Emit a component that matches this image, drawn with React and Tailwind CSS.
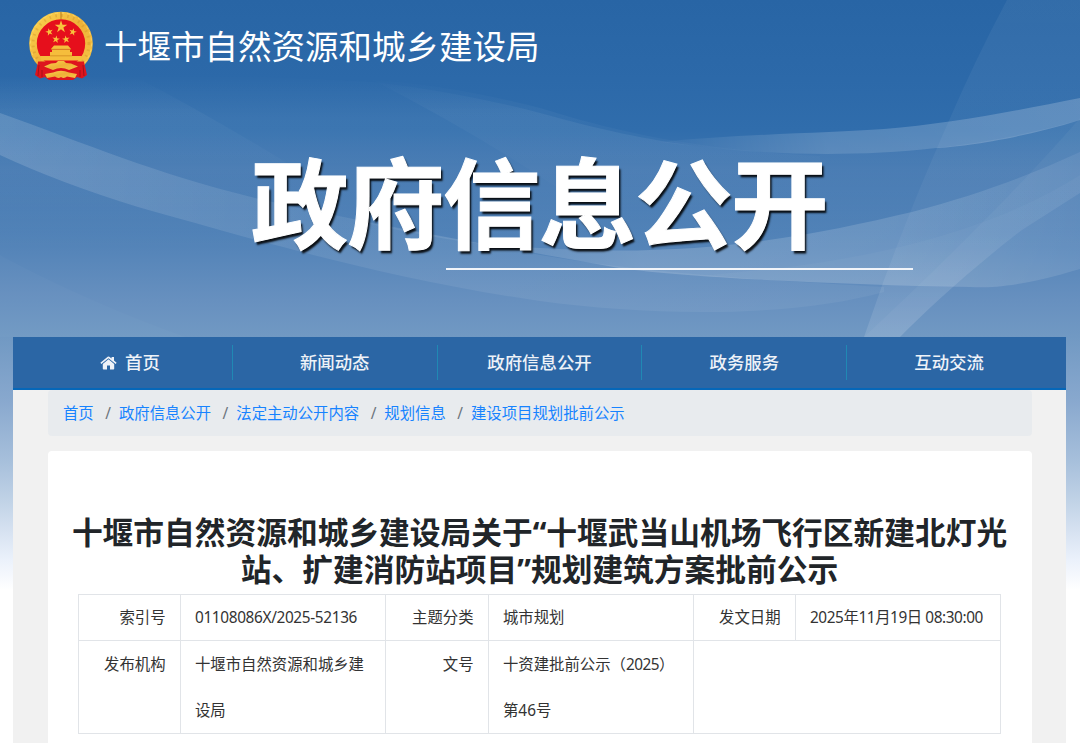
import React from 'react';

const NAV_ITEMS = ['首页', '新闻动态', '政府信息公开', '政务服务', '互动交流'];
const CRUMBS = ['首页', '政府信息公开', '法定主动公开内容', '规划信息', '建设项目规划批前公示'];

const STAR = 'M0 -1 L0.225 -0.309 L0.951 -0.309 L0.363 0.118 L0.588 0.809 L0 0.382 L-0.588 0.809 L-0.363 0.118 L-0.951 -0.309 L-0.225 -0.309 Z';

const Emblem = () => (
  <svg className="w-[66px] h-[70px] shrink-0" viewBox="0 0 66 70">
    <defs>
      <linearGradient id="gold" x1="0" y1="0" x2="1" y2="1">
        <stop offset="0" stopColor="#fbd34f" />
        <stop offset="0.5" stopColor="#eeb238" />
        <stop offset="1" stopColor="#f6c445" />
      </linearGradient>
    </defs>
    {/* wreath */}
    <ellipse cx="33" cy="32.5" rx="28" ry="28" fill="#e60f1c" stroke="url(#gold)" strokeWidth="7.6" />
    <circle cx="33" cy="32.5" r="28" fill="none" stroke="#c88a22" strokeWidth="3" strokeDasharray="1.6 4.4" opacity="0.35" />
    <circle cx="33" cy="32.5" r="30.6" fill="none" stroke="#ffe07a" strokeWidth="1" strokeDasharray="3 3" opacity="0.6" />
    <path d="M33 1 V8" stroke="#b97c1d" strokeWidth="1" />
    <g fill="#f8c33d">
      <path d={STAR} transform="translate(33 15.8) scale(6.6)" />
      <path d={STAR} transform="translate(21.3 21) rotate(-15) scale(4)" />
      <path d={STAR} transform="translate(44.8 21) rotate(15) scale(4)" />
      <path d={STAR} transform="translate(28 28.4) rotate(10) scale(4)" />
      <path d={STAR} transform="translate(38 28.4) rotate(-10) scale(4)" />
    </g>
    {/* gate tower */}
    <path d="M26 34.5 H40 L43 38 H23 Z M24 38.5 H42 V41 H44 V45 H54 L53 49.5 H13 L12 45 H22 V41 H24 Z" fill="#f5bd3c" />
    <path d="M23 38.3 H43 M22 44.8 H44" stroke="#cf8a22" strokeWidth="0.8" />
    {/* drapery, gear and ribbon */}
    <path d="M10 50.5 L56 50.5 L56 51 L59 64 L54 67.5 L49 66 L45 69 L21 69 L17 66 L12 67.5 L7 64 L10 51 Z" fill="#dd151e" />
    <path d="M28 52 L30 50 H36 L38 52 L43 52.5 L50 55.5 L41 59 Q33 55 25 59 L16 55.5 L23 52.5 Z" fill="url(#gold)" />
    <path d="M17 63 L25 61.5 Q33 58 41 61.5 L49 63 L47 67 L39 65.5 Q36 68 33 66 Q30 68 27 65.5 L19 67 Z" fill="url(#gold)" />
    <path d="M11 54 L10 65 M14 59 L14 66 M52 59 L52 66 M55 54 L56 65" stroke="#a00f17" strokeWidth="0.9" />
  </svg>
);

const HomeIcon = () => (
  <svg className="mr-[8px] h-[14px] w-[17px]" viewBox="0 0 17 14" fill="currentColor">
    <path d="M8.5 3.3 L14.2 7.9 V12.8 Q14.2 13.6 13.4 13.6 H10 V9.6 H7 V13.6 H3.6 Q2.8 13.6 2.8 12.8 V7.9 Z" />
    <path d="M8.5 0.4 Q8.9 0.4 9.3 0.7 L11.6 2.6 V1 H14 V4.6 L16.6 6.8 L15.7 7.9 L8.5 2.2 L1.3 7.9 L0.4 6.8 L7.7 0.7 Q8.1 0.4 8.5 0.4 Z" />
  </svg>
);

const Waves = () => (
  <svg className="absolute top-0 left-0 w-[1080px] h-[337px]" viewBox="0 0 1080 337">
    <defs>
      <linearGradient id="haze" gradientUnits="userSpaceOnUse" x1="0" y1="75" x2="0" y2="250">
        <stop offset="0" stopColor="#fff" stopOpacity="0" />
        <stop offset="0.25" stopColor="#fff" stopOpacity="0.06" />
        <stop offset="0.45" stopColor="#fff" stopOpacity="0.06" />
        <stop offset="1" stopColor="#fff" stopOpacity="0" />
      </linearGradient>
      <linearGradient id="ribbonLeft" x1="0" y1="0" x2="1" y2="0">
        <stop offset="0" stopColor="#fff" stopOpacity="0.15" />
        <stop offset="0.35" stopColor="#fff" stopOpacity="0.08" />
        <stop offset="1" stopColor="#fff" stopOpacity="0.05" />
      </linearGradient>
      <linearGradient id="ribbonTop" x1="0" y1="0" x2="1" y2="0">
        <stop offset="0" stopColor="#fff" stopOpacity="0.02" />
        <stop offset="0.4" stopColor="#fff" stopOpacity="0.17" />
        <stop offset="1" stopColor="#fff" stopOpacity="0.2" />
      </linearGradient>
      <linearGradient id="ribbonMid" gradientUnits="userSpaceOnUse" x1="344" y1="0" x2="1080" y2="0">
        <stop offset="0" stopColor="#fff" stopOpacity="0.03" />
        <stop offset="0.4" stopColor="#fff" stopOpacity="0.17" />
        <stop offset="0.75" stopColor="#fff" stopOpacity="0.14" />
        <stop offset="1" stopColor="#fff" stopOpacity="0.07" />
      </linearGradient>
      <linearGradient id="diagonal" x1="0" y1="0" x2="0" y2="1">
        <stop offset="0" stopColor="#fff" stopOpacity="0.05" />
        <stop offset="0.7" stopColor="#fff" stopOpacity="0.04" />
        <stop offset="1" stopColor="#fff" stopOpacity="0.12" />
      </linearGradient>
      <linearGradient id="veil" gradientUnits="userSpaceOnUse" x1="0" y1="76" x2="0" y2="215">
        <stop offset="0" stopColor="#fff" stopOpacity="0" />
        <stop offset="0.25" stopColor="#fff" stopOpacity="0.035" />
        <stop offset="1" stopColor="#fff" stopOpacity="0" />
      </linearGradient>
    </defs>
    <path d="M0 72 Q200 72 373 82 Q460 92 540 113 C600 130 650 140 695 146 C760 154 850 158 936 148 Q1010 140 1080 120 L1080 260 L0 260 Z" fill="url(#haze)" />
    <path d="M134 76 Q205 113 282 160 L360 215 L0 215 L0 75 Z" fill="url(#veil)" />
    <path d="M373 80 Q460 125 530 170 L600 215 L820 215 L820 156 C700 150 620 133 540 108 Q450 85 373 80 Z" fill="url(#veil)" />
    <path d="M0 113 C90 145 150 172 255 198 C350 220 450 237 540 255 C650 274 780 281 884 287 L884 292 C790 318 650 316 540 301 C380 278 250 238 138 207 Q60 183 0 155 Z" fill="url(#ribbonLeft)" />
    <path d="M0 255 Q90 303 186 337 L0 337 Z" fill="#fff" opacity="0.02" />
    <path d="M660 142 C740 134 830 133 884 129 C950 124 1020 110 1080 98 L1080 120 C1020 139 960 147 936 148 C850 158 760 154 695 146 Z" fill="url(#ribbonTop)" />
    <path d="M344 218 C430 238 480 246 540 248 C700 258 810 236 912 212 C980 194 1030 175 1080 152 L1080 269 C1020 287 990 288 970 287 C850 285 690 278 619 268 C530 252 430 235 344 218 Z" fill="url(#ribbonMid)" />
    <path d="M780 268 Q970 245 1080 175 L1080 269 C1020 287 990 288 970 287 Q860 286 700 276 Z" fill="#fff" opacity="0.03" />
    <path d="M1007 0 Q975 60 948 123 C925 175 908 217 884 280 L864 337 L900 337 C930 307 970 270 1022 230 L1080 193 L1080 0 Z" fill="url(#diagonal)" />
    <path d="M1080 118 Q1000 210 864 337 L900 337 C930 307 970 270 1022 230 L1080 193 Z" fill="#fff" opacity="0.04" />
  </svg>
);

const Breadcrumb = () => (
  <ol className="flex h-[46px] items-center rounded-[4px] bg-[#e8ebee] pl-[15.5px] pt-[2px] text-[15.36px] text-[#1783ff]">
    {CRUMBS.map((name, i) => (
      <li key={name} className="flex whitespace-nowrap">
        {i > 0 && <span className="w-[25.2px] pl-[11.5px] text-[#6c757d]">/</span>}
        <a href="#">{name}</a>
      </li>
    ))}
  </ol>
);

const th = 'border border-[#e1e4e8] px-[14px] pt-px pb-0 text-right align-top font-normal';
const td = 'border border-[#e1e4e8] px-[14.5px] pt-px pb-0 text-left align-top';

const InfoTable = () => (
  <table className="ml-[30px] mt-[6px] w-[923px] table-fixed border-collapse text-[15.36px] text-[#333]">
    <colgroup>
      <col className="w-[102px]" />
      <col className="w-[205px]" />
      <col className="w-[103px]" />
      <col className="w-[205px]" />
      <col className="w-[102px]" />
      <col className="w-[205px]" />
    </colgroup>
    <tbody>
      <tr className="h-[46px] leading-[44px]">
        <td className={th}>索引号</td>
        <td className={`${td} tracking-[-0.35px]`}>01108086X/2025-52136</td>
        <td className={th}>主题分类</td>
        <td className={td}>城市规划</td>
        <td className={th}>发文日期</td>
        <td className={`${td} whitespace-nowrap tracking-[-0.42px]`}>2025年11月19日 08:30:00</td>
      </tr>
      <tr className="h-[93px] leading-[45.5px]">
        <td className={th}>发布机构</td>
        <td className={td}>十堰市自然资源和城乡建<br />设局</td>
        <td className={th}>文号</td>
        <td className={td}>十资建批前公示（<span className="tracking-[-0.5px]">2025</span>）<br />第46号</td>
        <td className={td} colSpan={2}></td>
      </tr>
    </tbody>
  </table>
);

export default function App() {
  return (
    <div className="relative h-[743px] w-[1080px] overflow-hidden bg-[linear-gradient(180deg,#2865a5_0px,#2c69a9_80px,#306dac_130px,#4176b0_170px,#4e80b6_230px,#6790bf_300px,#7199c3_337px,#88a8ce_400px,#a6bfdb_460px,#c0d2e6_500px,#ebf1fb_560px,#ffffff_590px)] font-['Noto_Sans','Noto_Sans_CJK_SC',sans-serif]">
      <Waves />
      <div className="relative flex h-full flex-col pl-[13px] pr-[14px]">
        <header className="flex h-[92px] shrink-0 items-center gap-[10px] pl-[15px]">
          <Emblem />
          <h1 className="whitespace-nowrap pt-[2px] text-[33.5px] leading-none text-white">十堰市自然资源和城乡建设局</h1>
        </header>

        <div className="h-[245px] shrink-0">
          <h2 className="ml-[238px] mt-[62px] h-[114px] whitespace-nowrap text-[97.5px] font-bold leading-[100px] tracking-[-1.5px] text-white [text-shadow:2px_3px_2px_rgba(0,0,0,0.9)] [-webkit-text-stroke:1px_white]">政府信息公开</h2>
          <div className="ml-[433px] h-[2px] w-[467px] bg-[#f1f4f9]" />
        </div>

        <nav className="flex h-[53px] shrink-0 border-b-2 border-[#0567b9] bg-[#2b66a5] px-[15px] pt-[8px]">
          {NAV_ITEMS.map((name, i) => (
            <a
              key={name}
              href="#"
              className="flex h-[35px] flex-1 items-center justify-center border-r border-[#2089b4] text-[17.4px] font-medium text-[#eef2f8] last:border-r-0"
            >
              {i === 0 && <HomeIcon />}
              {name}
            </a>
          ))}
        </nav>

        <main className="flex flex-1 flex-col bg-[#f1f1f1] px-[34.5px]">
          <Breadcrumb />
          <article className="mt-[15px] flex-1 rounded-t-[4px] bg-white pt-[63px]">
            <h3 className="whitespace-nowrap text-center text-[30.72px] font-bold leading-[37px] text-[#212529]">
              十堰市自然资源和城乡建设局关于“十堰武当山机场飞行区新建北灯光
              <br />
              站、扩建消防站项目”规划建筑方案批前公示
            </h3>
            <InfoTable />
          </article>
        </main>
      </div>
    </div>
  );
}
